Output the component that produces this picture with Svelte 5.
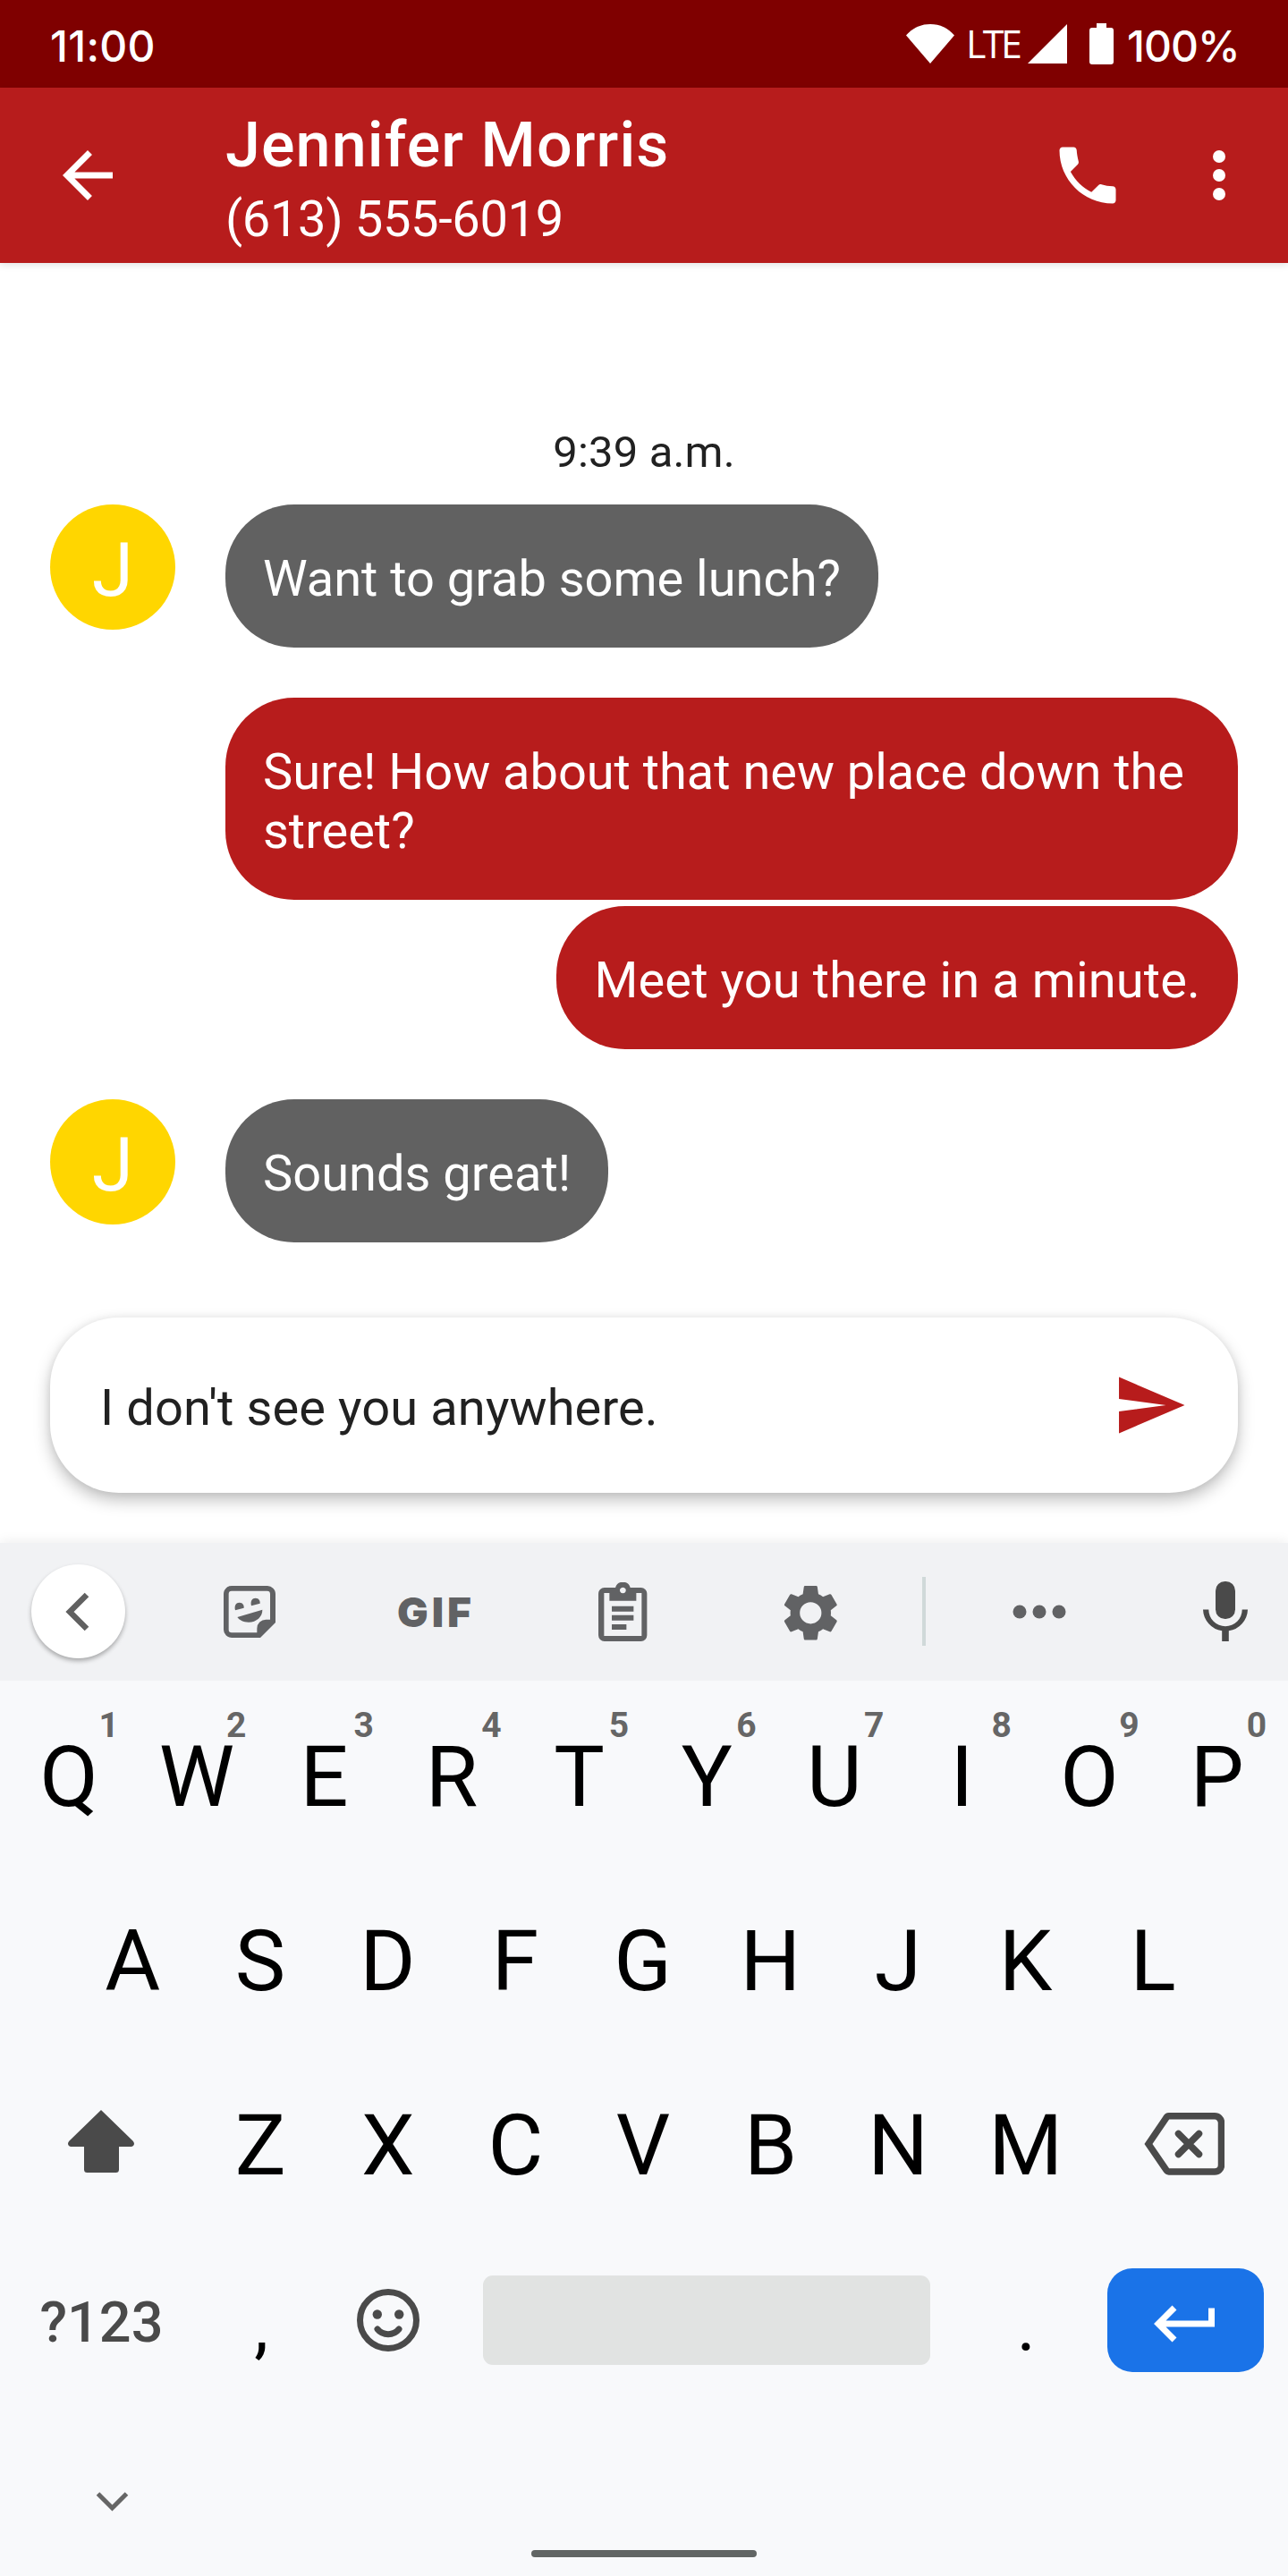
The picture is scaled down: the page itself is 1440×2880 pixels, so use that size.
<script>
  const topRow = 'QWERTYUIOP'.split('').map((letter, i) => ({ letter, hint: (i + 1) % 10 }));
  const homeRow = 'ASDFGHJKL'.split('');
  const bottomRow = 'ZXCVBNM'.split('');

  const groups = [
    { from: 'them', texts: [{ body: 'Want to grab some lunch?', tracking: -0.03 }] },
    {
      from: 'me',
      texts: [
        { body: 'Sure! How about that new place down the street?', tracking: -0.04 },
        { body: 'Meet you there in a minute.', tracking: 0.12 },
      ],
    },
    { from: 'them', texts: [{ body: 'Sounds great!', tracking: 0 }] },
  ];
</script>

<div class="screen">
  <div class="status">
    <span class="clock">11:00</span>
    <svg class="wifi" width="54" height="44" viewBox="0 0 54 44"><path d="M0 12.5C7 4.5 16 0 27 0s20 4.5 27 12.5L27 44z" /></svg>
    <span class="lte">LTE</span>
    <svg class="signal" width="44" height="44" viewBox="0 0 44 44"><path d="M44 0v44H0z" /></svg>
    <svg class="battery" width="27" height="46" viewBox="0 0 27 46"><path d="M8 0h11v5h5a3 3 0 0 1 3 3v35a3 3 0 0 1-3 3H3a3 3 0 0 1-3-3V8a3 3 0 0 1 3-3h5z" /></svg>
    <span class="percent">100%</span>
  </div>

  <header class="appbar">
    <svg class="back" width="84" height="84" viewBox="0 0 24 24"><path d="M20 11H7.83l5.59-5.59L12 4l-8 8 8 8 1.41-1.41L7.83 13H20v-2z" /></svg>
    <div class="who">
      <div class="name">Jennifer Morris</div>
      <div class="phone">(613) 555-6019</div>
    </div>
    <svg width="84" height="84" viewBox="0 0 24 24"><path d="M6.54 10.84l2.26-2.26c.27-.27.38-.66.29-1.02C8.76 6.2 8.55 5 8.5 4c0-.55-.45-1-1-1H4c-.55 0-1 .45-1 1 0 9.39 7.61 17 17 17 .55 0 1-.45 1-1v-3.49c0-.55-.45-1-1-1-1.24 0-2.45-.2-3.57-.57-.35-.11-.74-.03-1.02.24l-2.2 2.2c-2.83-1.44-5.15-3.75-6.67-6.54z" /></svg>
    <svg class="more" width="84" height="84" viewBox="0 0 24 24"><circle cx="12" cy="6" r="2" /><circle cx="12" cy="12" r="2" /><circle cx="12" cy="18" r="2" /></svg>
  </header>

  <main class="chat">
    <div class="time">9:39 a.m.</div>
    {#each groups as group}
      <section class="group {group.from}">
        {#if group.from === 'them'}
          <div class="avatar">J</div>
        {/if}
        <div class="stack">
          {#each group.texts as text}
            <div class="bubble" style:letter-spacing="{text.tracking}px">{text.body}</div>
          {/each}
        </div>
      </section>
    {/each}
    <div class="compose">
      <span>I don't see you anywhere.</span>
      <svg width="84" height="84" viewBox="0 0 24 24"><path d="M2.01 21L23 12 2.01 3v7l15 2-15 2z" /></svg>
    </div>
  </main>

  <div class="keyboard">
    <div class="tools">
      <div class="tool first">
        <div class="collapse">
          <svg width="28" height="44" viewBox="0 0 28 44"><path d="M24 3L5 22l19 19" /></svg>
        </div>
      </div>
      <div class="tool">
        <svg width="58" height="58" viewBox="0 0 174 174">
          <path fill-rule="evenodd" d="M27 0H147a27 27 0 0 1 27 27V123L123 174H27a27 27 0 0 1-27-27V27A27 27 0 0 1 27 0ZM27 17a10 10 0 0 0-10 10V147a10 10 0 0 0 10 10H112V143a30 30 0 0 1 30-30H156V27a10 10 0 0 0-10-10Z" />
          <path d="M39 82c-4-16 3-26 14-26s16 9 15 18zM93 67c-4-16 3-26 14-26s16 9 15 18zM46 105L130 80C131 103 110 122 84 122C66 122 52 114 46 105Z" />
        </svg>
      </div>
      <div class="tool gif">GIF</div>
      <div class="tool">
        <svg width="54.4" height="66" viewBox="0 0 163 198">
          <path fill-rule="evenodd" d="M20 18H57A26 26 0 0 1 107 18H143a20 20 0 0 1 20 20V178a20 20 0 0 1-20 20H20A20 20 0 0 1 0 178V38A20 20 0 0 1 20 18ZM19 36V180H145V36H127V62H37V36ZM82 17a10 10 0 1 0 .1 0ZM45 80H118V98H45ZM45 110H118V128H45ZM45 141H94V159H45Z" />
        </svg>
      </div>
      <div class="tool gear">
        <svg width="72.6" height="72.6" viewBox="0 0 24 24"><path fill-rule="evenodd" d="M19.43 12.98c.04-.32.07-.64.07-.98s-.03-.66-.07-.98l2.11-1.65c.19-.15.24-.42.12-.64l-2-3.46c-.12-.22-.39-.3-.61-.22l-2.49 1c-.52-.4-1.08-.73-1.69-.98l-.38-2.65C14.46 2.18 14.25 2 14 2h-4c-.25 0-.46.18-.49.42l-.38 2.65c-.61.25-1.17.59-1.69.98l-2.49-1c-.23-.09-.49 0-.61.22l-2 3.46c-.13.22-.07.49.12.64l2.11 1.65c-.04.32-.07.65-.07.98s.03.66.07.98l-2.11 1.65c-.19.15-.24.42-.12.64l2 3.46c.12.22.39.3.61.22l2.49-1c.52.4 1.08.73 1.69.98l.38 2.65c.03.24.24.42.49.42h4c.25 0 .46-.18.49-.42l.38-2.65c.61-.25 1.17-.59 1.69-.98l2.49 1c.23.09.49 0 .61-.22l2-3.46c.12-.22.07-.49-.12-.64l-2.11-1.65zM12 8a4 4 0 1 0 0 8a4 4 0 1 0 0-8z" /></svg>
      </div>
      <div class="divider"></div>
      <div class="tool dots">
        <svg width="60" height="16" viewBox="0 0 60 16"><circle cx="8" cy="8" r="7.5" /><circle cx="30" cy="8" r="7.5" /><circle cx="52" cy="8" r="7.5" /></svg>
      </div>
      <div class="tool mic">
        <svg width="50" height="67" viewBox="0 0 50 67"><rect x="14" width="22" height="42" rx="10.5" /><path d="M0 31.5h6.3a18.7 18.7 0 0 0 37.4 0H50a25 25 0 0 1-21.2 23.8V67h-7.6V55.3A25 25 0 0 1 0 31.5z" /></svg>
      </div>
    </div>

    <div class="row top">
      {#each topRow as key}
        <div class="key">{key.letter}<span class="hint">{key.hint}</span></div>
      {/each}
    </div>
    <div class="row home">
      {#each homeRow as letter}
        <div class="key">{letter}</div>
      {/each}
    </div>
    <div class="row">
      <div class="wide shift">
        <svg width="74" height="70" viewBox="0 0 74 70"><path d="M37 0L72.500 34.500c3 3.500 1 6.500-2 6.500H57v25.500a3.500 3.500 0 0 1-3.500 3.500h-32a3.500 3.500 0 0 1-3.500-3.500V41H3.500c-3 0-5-3-2-6.500z" /></svg>
      </div>
      {#each bottomRow as letter}
        <div class="key">{letter}</div>
      {/each}
      <div class="wide erase">
        <svg class="line" width="90" height="70" viewBox="0 0 90 70"><path d="M28 3.800H79a7.500 7.500 0 0 1 7.500 7.500V58.500a7.500 7.500 0 0 1-7.500 7.500H28a4 4 0 0 1-3.200-2L5 35 24.800 5.800a4 4 0 0 1 3.200-2z" /><path class="cross" d="M38.500 23.500l23 23m0-23l-23 23" /></svg>
      </div>
    </div>
    <div class="row space-row">
      <div class="wide sym">?123</div>
      <div class="key punct">,</div>
      <div class="key">
        <svg width="70" height="70" viewBox="0 0 70 70"><circle class="ring" cx="35" cy="35" r="31.500" /><circle cx="22.800" cy="28.500" r="5.200" /><circle cx="47.200" cy="28.500" r="5.200" /><path class="smile" d="M23 45c6 7.500 18 7.500 24 0" /></svg>
      </div>
      <div class="space"></div>
      <div class="key punct">.</div>
      <div class="enter">
        <svg width="68" height="42" viewBox="0 0 68 42"><path d="M23 3L5 21l18 18M5 21h59.500V3.500" /></svg>
      </div>
    </div>
    <div class="nav">
      <svg width="37" height="24" viewBox="0 0 37 24"><path d="M2.500 3l16 16 16-16" /></svg>
      <div class="handle"></div>
    </div>
  </div>
</div>

<style>
  :global(body) {
    margin: 0;
    background: #fff;
  }
  .screen {
    width: 1440px;
    height: 2880px;
    display: flex;
    flex-direction: column;
    overflow: hidden;
    background: #fff;
    font-family: Roboto, 'Liberation Sans', sans-serif;
    color: #212121;
  }
  svg {
    display: block;
    flex: none;
    fill: currentColor;
  }

  .status {
    height: 98px;
    flex: none;
    display: flex;
    align-items: center;
    box-sizing: border-box;
    padding-left: 56px;
    background: #7f0000;
    color: #fff;
  }
  .clock,
  .percent {
    font-family: Inter, sans-serif;
    font-weight: 500;
    font-size: 48px;
    line-height: 60px;
    padding-top: 5px;
  }
  .clock {
    width: 957px;
    flex: none;
    letter-spacing: 0.3px;
  }
  .lte {
    width: 69px;
    flex: none;
    margin-left: 13px;
    font-family: 'Open Sans', sans-serif;
    font-weight: 400;
    font-size: 43px;
    line-height: 60px;
    letter-spacing: -3.6px;
    white-space: nowrap;
  }
  .battery {
    margin: 0 15px 0 25px;
  }
  .percent {
    letter-spacing: -1px;
  }

  .appbar {
    height: 196px;
    flex: none;
    display: flex;
    align-items: center;
    box-sizing: border-box;
    padding: 0 35px 0 56px;
    background: #b71c1c;
    color: #fff;
    box-shadow: 0 2px 8px rgba(0, 0, 0, 0.12);
  }
  .who {
    flex: 1;
    margin-left: 112px;
    padding-top: 16px;
  }
  .name {
    font-weight: 500;
    font-size: 70px;
    line-height: 82px;
    letter-spacing: 1.1px;
  }
  .phone {
    font-size: 56px;
    line-height: 84px;
    letter-spacing: -0.35px;
  }
  .more {
    margin-left: 63px;
  }

  .chat {
    flex: 1;
    display: flex;
    flex-direction: column;
    padding: 183px 56px 0;
  }
  .time {
    text-align: center;
    font-size: 49px;
    line-height: 58px;
    letter-spacing: 0.15px;
    margin-bottom: 29px;
  }
  .group {
    display: flex;
    margin-bottom: 56px;
  }
  .avatar {
    width: 140px;
    height: 140px;
    flex: none;
    margin-right: 56px;
    border-radius: 50%;
    background: #ffd600;
    color: #fff;
    font-size: 84px;
    line-height: 148px;
    text-align: center;
  }
  .stack {
    display: flex;
    flex-direction: column;
    gap: 7px;
  }
  .me .stack {
    margin-left: 196px;
    align-items: flex-end;
  }
  .bubble {
    padding: 50px 42px 44px;
    border-radius: 77px;
    background: #616161;
    color: #fff;
    font-size: 56px;
    line-height: 66px;
  }
  .me .bubble {
    background: #b71c1c;
  }
  .compose {
    height: 196px;
    margin-top: 28px;
    display: flex;
    align-items: center;
    justify-content: space-between;
    padding: 0 56px;
    border-radius: 77px;
    background: #fff;
    box-shadow: 0 8px 18px rgba(0, 0, 0, 0.25), 0 0 8px rgba(0, 0, 0, 0.06);
    font-size: 56px;
    line-height: 66px;
    letter-spacing: 0.1px;
  }
  .compose span {
    padding-top: 6px;
  }
  .compose svg {
    color: #b71c1c;
  }

  .keyboard {
    height: 1155px;
    flex: none;
    display: flex;
    flex-direction: column;
    background: #f8f9fb;
    color: #000;
    box-shadow: 0 0 14px rgba(0, 0, 0, 0.09);
  }
  .tools {
    height: 154px;
    flex: none;
    display: flex;
    align-items: center;
    box-sizing: border-box;
    padding-bottom: 1px;
    background: #f1f2f4;
    color: #616264;
  }
  .tool {
    width: 209px;
    flex: none;
    display: flex;
    justify-content: center;
    box-sizing: border-box;
  }
  .tool.first {
    width: 174px;
  }
  .collapse {
    width: 105px;
    height: 105px;
    display: flex;
    align-items: center;
    justify-content: center;
    border-radius: 50%;
    background: #fff;
    box-shadow: 0 3px 5px rgba(0, 0, 0, 0.3);
  }
  .collapse svg {
    fill: none;
    stroke: #616161;
    stroke-width: 6.5;
  }
  .tool.gif {
    font-family: Inter, sans-serif;
    font-weight: 900;
    font-size: 46px;
    line-height: 50px;
    letter-spacing: 4px;
  }
  .tool.gear {
    padding: 4px 0 0 2px;
  }
  .divider {
    width: 4px;
    height: 77px;
    flex: none;
    margin-left: 21px;
    background: #d0d9d9;
  }
  .tool.dots {
    width: 254px;
  }
  .tool.mic {
    width: 151px;
    padding-left: 11px;
    color: #4a4a4a;
  }

  .row {
    height: 206px;
    flex: none;
    display: flex;
    align-items: center;
    padding: 0 7px;
    font-size: 95px;
    line-height: 112px;
  }
  .row.top {
    padding-top: 5px;
  }
  .row.home {
    padding: 0 78px;
  }
  .key,
  .wide {
    position: relative;
    flex: 0 0 142.6px;
    display: flex;
    justify-content: center;
    box-sizing: border-box;
    padding-right: 2px;
    color: #000;
  }
  .wide {
    flex-basis: 213.9px;
    color: #4a4a4a;
  }
  .shift {
    padding: 0 1px 10px 0;
  }
  .erase {
    padding: 0 3px 4px 0;
  }
  .hint {
    position: absolute;
    top: -25px;
    right: 16px;
    width: 24px;
    text-align: center;
    font-weight: 700;
    font-size: 39px;
    line-height: 46px;
    color: #666;
  }
  .line path {
    fill: none;
    stroke: #4a4a4a;
    stroke-width: 7.5;
  }
  .line .cross {
    stroke-linecap: round;
  }
  .row.space-row {
    height: 184px;
  }
  .space-row .key svg {
    color: #4a4a4a;
  }
  .wide.sym {
    font-weight: 500;
    font-size: 63px;
    padding: 5px 1px 0 0;
  }
  .key.punct {
    font-size: 80px;
    padding: 14px 0 0;
  }
  .ring,
  .smile {
    fill: none;
    stroke: #4a4a4a;
    stroke-width: 7;
    stroke-linecap: round;
  }
  .space {
    width: 500px;
    height: 100px;
    flex: none;
    margin: 0 36px 0 34px;
    border-radius: 11px;
    background: #e1e3e2;
  }
  .enter {
    width: 175px;
    height: 116px;
    flex: none;
    box-sizing: border-box;
    margin-left: 19px;
    padding: 7px 2px 0 0;
    display: flex;
    align-items: center;
    justify-content: center;
    border-radius: 28px;
    background: #1a73e8;
  }
  .enter svg {
    fill: none;
    stroke: #fff;
    stroke-width: 7;
  }
  .nav {
    flex: 1;
    display: grid;
    grid-template-columns: 594px 252px;
    align-content: end;
    align-items: end;
    padding-bottom: 21px;
  }
  .nav svg {
    margin: 0 0 50px 107px;
    fill: none;
    stroke: #666;
    stroke-width: 5;
  }
  .handle {
    height: 8px;
    border-radius: 4px;
    background: #616564;
  }
</style>
